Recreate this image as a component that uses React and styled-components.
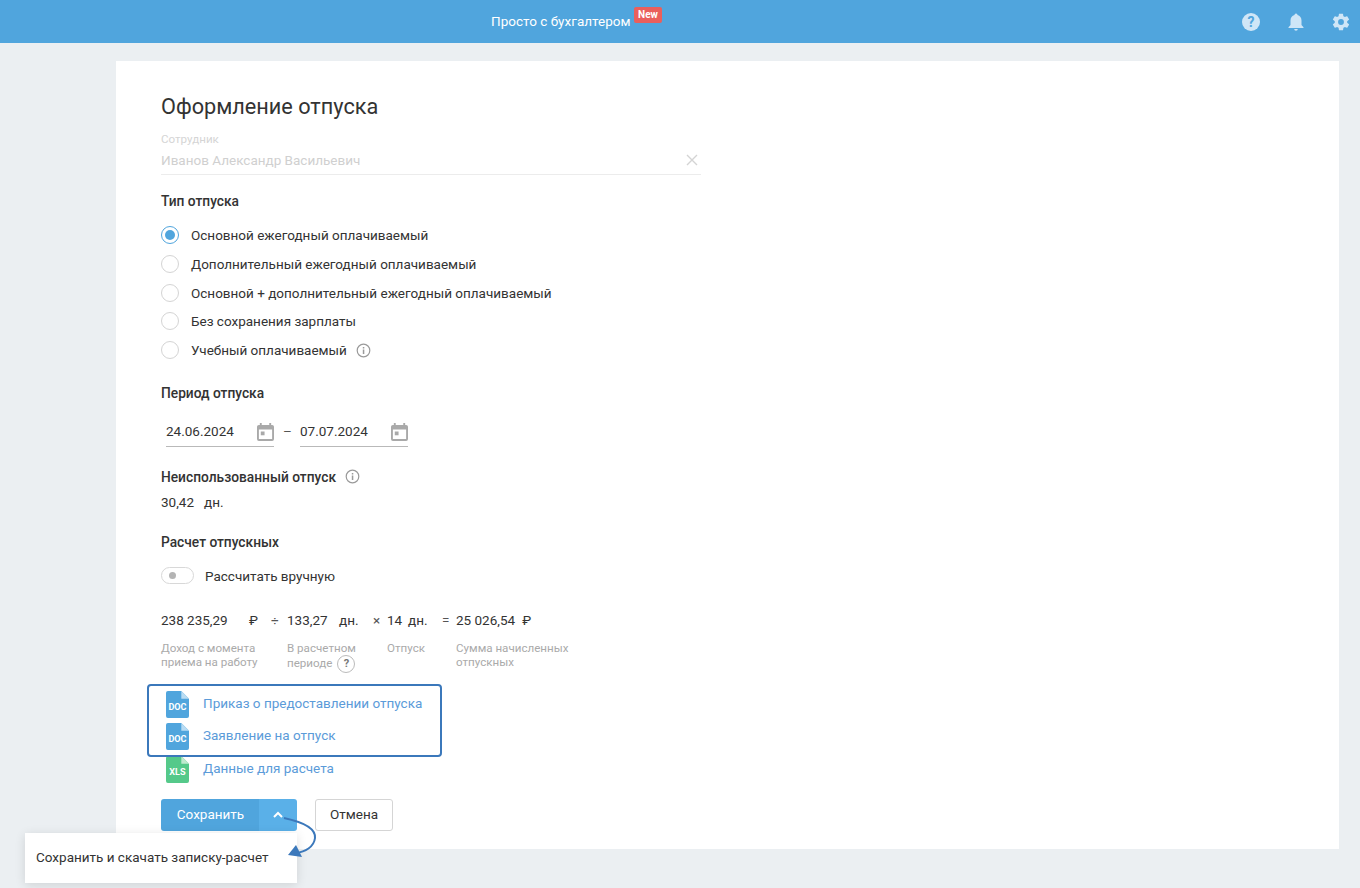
import React from "react";
import styled, { createGlobalStyle } from "styled-components";

const GlobalStyle = createGlobalStyle`
  html, body {
    margin: 0;
    padding: 0;
    background: #ebeff2;
    font-family: Roboto, "Liberation Sans", sans-serif;
    font-size: 13.5px;
    color: #333;
  }
`;

const Page = styled.div`
  position: relative;
  width: 1360px;
  height: 888px;
  overflow: hidden;
`;

const Header = styled.header`
  height: 43px;
  background: #50a5dd;
  display: flex;
  align-items: center;
  padding-left: 491px;
  padding-right: 9px;
`;

const Brand = styled.span`
  position: relative;
  color: #fff;
  font-size: 13.5px;
  top: -1px;
`;

const NewBadge = styled.span`
  position: absolute;
  left: 143px;
  top: -6px;
  width: 28px;
  height: 16px;
  text-align: center;
  background: #ea5f5c;
  color: #fff;
  border-radius: 2px;
  font-size: 10px;
  font-weight: 700;
  line-height: 15px;
`;

const HeaderIcons = styled.div`
  margin-left: auto;
  display: flex;
  align-items: center;
  gap: 25px;
`;

const Card = styled.main`
  margin: 18px 0 0 116px;
  width: 1223px;
  height: 788px;
  box-sizing: border-box;
  background: #fff;
  padding: 32px 0 0 45px;
`;

const Title = styled.h1`
  margin: 0;
  font-size: 21.7px;
  font-weight: 400;
  line-height: 28px;
  color: #333;
`;

const EmployeeField = styled.div`
  position: relative;
  margin-top: 9px;
  width: 540px;
  height: 44px;
  border-bottom: 1px solid #ececec;
`;

const EmployeeLabel = styled.div`
  font-size: 11.6px;
  line-height: 18px;
  color: #d5d5d5;
`;

const EmployeeValue = styled.div`
  font-size: 13.5px;
  line-height: 24px;
  color: #d0d0d0;
`;

const ClearIcon = styled.svg`
  position: absolute;
  right: 3px;
  top: 24px;
`;

const SectionTitle = styled.div`
  font-size: 13.75px;
  font-weight: 500;
  line-height: 20px;
  color: #333;
  display: flex;
  align-items: center;
  margin-top: ${(p) => p.$top}px;
`;

const RadioList = styled.div`
  margin-top: 9.7px;
  display: flex;
  flex-direction: column;
`;

const RadioRow = styled.label`
  display: flex;
  align-items: center;
  height: 28.75px;
  line-height: 20px;
  color: #333;
`;

const RadioCircle = styled.span`
  width: 18px;
  height: 18px;
  box-sizing: border-box;
  border-radius: 50%;
  border: 1px solid ${(p) => (p.$checked ? "#50a5dd" : "#d4d4d4")};
  margin-right: 12px;
  display: flex;
  align-items: center;
  justify-content: center;
  &::after {
    content: "";
    width: 10px;
    height: 10px;
    border-radius: 50%;
    background: ${(p) => (p.$checked ? "#50a5dd" : "transparent")};
  }
`;

const InfoIcon = styled.svg`
  margin-left: ${(p) => p.$left}px;
  flex: none;
`;

const DateRow = styled.div`
  margin-top: 14px;
  display: flex;
  align-items: flex-start;
`;

const DateField = styled.div`
  width: 108px;
  height: 29px;
  margin-left: ${(p) => p.$left}px;
  border-bottom: 1px solid #b9b9b9;
  display: flex;
  align-items: center;
  justify-content: space-between;
`;

const DateText = styled.span`
  color: #333;
`;

const Dash = styled.span`
  margin-left: 9px;
  width: 8px;
  line-height: 28px;
  color: #555;
`;

const PlainLine = styled.div`
  margin-top: 5px;
  line-height: 20px;
  color: #333;
  display: flex;
  gap: 10px;
`;

const ToggleRow = styled.div`
  margin-top: 14px;
  height: 20px;
  display: flex;
  align-items: center;
  gap: 11px;
  line-height: 20px;
`;

const Toggle = styled.span`
  width: 33px;
  height: 17px;
  box-sizing: border-box;
  border: 1px solid #d8d8d8;
  border-radius: 9px;
  padding-left: 7px;
  display: flex;
  align-items: center;
  &::before {
    content: "";
    width: 7px;
    height: 7px;
    border-radius: 50%;
    background: #b4b4b4;
  }
`;

const Formula = styled.div`
  margin-top: 24px;
  display: grid;
  grid-template-columns: 88px 22px 16px 52px 34px 14px 21px 34px 14px auto;
  line-height: 20px;
  color: #333;
  white-space: nowrap;
`;

const Sign = styled.span`
  color: #555;
`;

const Total = styled.span`
  display: flex;
  gap: 7px;
`;

const CaptionRow = styled.div`
  margin-top: 11px;
  display: flex;
`;

const Caption = styled.div`
  width: ${(p) => p.$width}px;
  font-size: 11.6px;
  line-height: 14px;
  color: #aaa;
`;

const HelpDot = styled.span`
  display: inline-flex;
  align-items: center;
  justify-content: center;
  width: 18px;
  height: 18px;
  box-sizing: border-box;
  border: 1px solid #bbb;
  border-radius: 50%;
  margin-left: 5px;
  font-size: 11px;
  font-weight: 700;
  color: #777;
  vertical-align: middle;
`;

const FileList = styled.div`
  position: relative;
  margin-top: 14px;
  margin-left: 5px;
  display: flex;
  flex-direction: column;
`;

const FileRow = styled.a`
  display: flex;
  align-items: center;
  height: 32.4px;
  color: #5b9bd9;
  gap: 14px;
`;

const FileGlyph = styled.svg`
  flex: none;
  margin-top: 3px;
`;

const Highlight = styled.div`
  position: absolute;
  left: -19px;
  top: -3px;
  width: 291px;
  height: 69px;
  border: 2px solid #3b78bb;
  border-radius: 4px;
`;

const Actions = styled.div`
  margin-top: 15px;
  display: flex;
  gap: 18px;
`;

const SplitButton = styled.div`
  display: flex;
  height: 32px;
  border-radius: 3px;
  overflow: hidden;
`;

const SaveButton = styled.button`
  width: 98px;
  border: 0;
  padding: 0 0 1px 1px;
  background: #50a5dd;
  color: #fff;
  font: 13.5px Roboto, sans-serif;
`;

const ArrowButton = styled.button`
  width: 38px;
  border: 0;
  padding: 0;
  background: #5ab0e8;
  display: flex;
  align-items: center;
  justify-content: center;
`;

const CancelButton = styled.button`
  width: 78px;
  height: 32px;
  box-sizing: border-box;
  border: 1px solid #d5d5d5;
  border-radius: 3px;
  background: #fff;
  color: #333;
  font: 13.5px Roboto, sans-serif;
  padding: 0 0 1px;
`;

const Popup = styled.div`
  position: absolute;
  left: 25px;
  top: 833px;
  width: 272px;
  height: 50px;
  background: #fff;
  box-shadow: 0 2px 10px rgba(0, 0, 0, 0.12);
  display: flex;
  align-items: center;
  padding-left: 11px;
  box-sizing: border-box;
  padding-bottom: 2px;
  color: #333;
`;

const Callout = styled.svg`
  position: absolute;
  left: 280px;
  top: 810px;
`;

const Info = ({ left }) => (
  <InfoIcon $left={left} width="15" height="15" viewBox="0 0 15 15" fill="none">
    <circle cx="7.5" cy="7.5" r="6.3" stroke="#9a9a9a" strokeWidth="1.2" />
    <rect x="6.8" y="6.500" width="1.500" height="4.500" fill="#9a9a9a" />
    <rect x="6.8" y="4" width="1.500" height="1.500" fill="#9a9a9a" />
  </InfoIcon>
);

const CalendarIcon = () => (
  <svg width="17" height="19" viewBox="0 0 18 20">
    <path
      d="M3 1h2v2h8V1h2v2h1a2 2 0 0 1 2 2v13a2 2 0 0 1-2 2H2a2 2 0 0 1-2-2V5a2 2 0 0 1 2-2h1V1zM2 8v10h14V8H2z"
      fill="#a9a9a9"
    />
    <rect x="4" y="10" width="4" height="4" fill="#a9a9a9" />
  </svg>
);

const FileIcon = ({ color, fold, label }) => (
  <FileGlyph width="23" height="27" viewBox="0 0 24 28">
    <path
      d="M2 0h14l8 8v18a2 2 0 0 1-2 2H2a2 2 0 0 1-2-2V2a2 2 0 0 1 2-2z"
      fill={color}
    />
    <path d="M16 0l8 8h-8z" fill={fold} />
    <text
      x="12"
      y="20"
      textAnchor="middle"
      fontFamily="Roboto, sans-serif"
      fontWeight="700"
      fontSize="9.500"
      fill="#fff"
    >
      {label}
    </text>
  </FileGlyph>
);

const types = [
  "Основной ежегодный оплачиваемый",
  "Дополнительный ежегодный оплачиваемый",
  "Основной + дополнительный ежегодный оплачиваемый",
  "Без сохранения зарплаты",
];

export default function App() {
  return (
    <Page>
      <GlobalStyle />
      <Header>
        <Brand>
          Просто с бухгалтером
          <NewBadge>New</NewBadge>
        </Brand>
        <HeaderIcons>
          <svg width="20" height="20" viewBox="0 0 20 20">
            <circle cx="10" cy="10" r="9" fill="#cfe6f7" />
            <text
              x="10"
              y="15"
              textAnchor="middle"
              fontFamily="Roboto, sans-serif"
              fontWeight="700"
              fontSize="14"
              fill="#50a5dd"
            >
              ?
            </text>
          </svg>
          <svg width="20" height="20" viewBox="0 0 20 20">
            <path
              d="M10 1.500a1.500 1.500 0 0 1 1.500 1.600C14 3.800 15.500 6 15.500 8.500V13l2 2.200V16h-15v-.8l2-2.200V8.500C4.500 6 6 3.800 8.500 3.100A1.500 1.500 0 0 1 10 1.500zM8.200 17h3.600a1.800 1.800 0 0 1-3.600 0z"
              fill="#cfe6f7"
            />
          </svg>
          <svg width="20" height="20" viewBox="0 0 24 24">
            <path
              d="M19.400 13c.04-.33.06-.66.06-1s-.02-.67-.06-1l2.100-1.640c.2-.15.240-.42.120-.64l-2-3.460c-.12-.22-.39-.3-.61-.22l-2.490 1c-.52-.4-1.080-.73-1.690-.98l-.38-2.650A.49.490 0 0 0 14 2h-4c-.25 0-.46.180-.49.420l-.38 2.650c-.61.250-1.170.59-1.690.98l-2.490-1a.5.5 0 0 0-.61.220l-2 3.460c-.13.220-.07.490.12.640L4.560 11c-.04.330-.07.670-.07 1s.03.670.07 1l-2.100 1.640c-.19.150-.25.420-.12.640l2 3.460c.12.220.39.300.61.220l2.490-1c.52.400 1.080.730 1.690.980l.38 2.650c.03.240.24.420.49.420h4c.25 0 .46-.18.49-.42l.38-2.650c.61-.25 1.170-.59 1.690-.98l2.490 1c.23.090.49 0 .61-.22l2-3.460c.12-.22.07-.49-.12-.64L19.400 13zM12 15.500a3.500 3.500 0 1 1 0-7 3.500 3.500 0 0 1 0 7z"
              fill="#cfe6f7"
            />
          </svg>
        </HeaderIcons>
      </Header>

      <Card>
        <Title>Оформление отпуска</Title>
        <EmployeeField>
          <EmployeeLabel>Сотрудник</EmployeeLabel>
          <EmployeeValue>Иванов Александр Васильевич</EmployeeValue>
          <ClearIcon width="12" height="12" viewBox="0 0 12 12">
            <path d="M1 1l10 10M11 1L1 11" stroke="#d4d4d4" strokeWidth="1.4" />
          </ClearIcon>
        </EmployeeField>

        <SectionTitle $top={16}>Тип отпуска</SectionTitle>
        <RadioList>
          {types.map((t, i) => (
            <RadioRow key={t}>
              <RadioCircle $checked={i === 0} />
              {t}
            </RadioRow>
          ))}
          <RadioRow>
            <RadioCircle />
            Учебный оплачиваемый
            <Info left={9} />
          </RadioRow>
        </RadioList>

        <SectionTitle $top={18.3}>Период отпуска</SectionTitle>
        <DateRow>
          <DateField $left={5}>
            <DateText>24.06.2024</DateText>
            <CalendarIcon />
          </DateField>
          <Dash>–</Dash>
          <DateField $left={9}>
            <DateText>07.07.2024</DateText>
            <CalendarIcon />
          </DateField>
        </DateRow>

        <SectionTitle $top={20}>
          Неиспользованный отпуск
          <Info left={9} />
        </SectionTitle>
        <PlainLine>
          <span>30,42</span>
          <span>дн.</span>
        </PlainLine>

        <SectionTitle $top={20}>Расчет отпускных</SectionTitle>
        <ToggleRow>
          <Toggle />
          Рассчитать вручную
        </ToggleRow>

        <Formula>
          <span>238 235,29</span>
          <span>₽</span>
          <Sign>÷</Sign>
          <span>133,27</span>
          <span>дн.</span>
          <Sign>×</Sign>
          <span>14</span>
          <span>дн.</span>
          <Sign>=</Sign>
          <Total>
            <span>25 026,54</span>
            <span>₽</span>
          </Total>
        </Formula>
        <CaptionRow>
          <Caption $width={126}>
            Доход с момента
            <br />
            приема на работу
          </Caption>
          <Caption $width={100}>
            В расчетном
            <br />
            периоде
            <HelpDot>?</HelpDot>
          </Caption>
          <Caption $width={69}>Отпуск</Caption>
          <Caption $width={125}>
            Сумма начисленных
            <br />
            отпускных
          </Caption>
        </CaptionRow>

        <FileList>
          <Highlight />
          <FileRow>
            <FileIcon color="#50a5dd" fold="#b9dcf3" label="DOC" />
            Приказ о предоставлении отпуска
          </FileRow>
          <FileRow>
            <FileIcon color="#50a5dd" fold="#b9dcf3" label="DOC" />
            Заявление на отпуск
          </FileRow>
          <FileRow>
            <FileIcon color="#55c98a" fold="#bfeacf" label="XLS" />
            Данные для расчета
          </FileRow>
        </FileList>

        <Actions>
          <SplitButton>
            <SaveButton>Сохранить</SaveButton>
            <ArrowButton>
              <svg width="12" height="8" viewBox="0 0 12 8">
                <path d="M2 6l4-4 4 4" fill="none" stroke="#fff" strokeWidth="2" />
              </svg>
            </ArrowButton>
          </SplitButton>
          <CancelButton>Отмена</CancelButton>
        </Actions>
      </Card>

      <Popup>Сохранить и скачать записку-расчет</Popup>
      <Callout width="40" height="52" viewBox="0 0 40 52" fill="none">
        <path
          d="M4 8c14 3 32 9 31 20-1 9-10 14-19 15"
          stroke="#3b78bb"
          strokeWidth="2"
        />
        <path d="M8 45l8-10 6 12z" fill="#3b78bb" />
      </Callout>
    </Page>
  );
}
